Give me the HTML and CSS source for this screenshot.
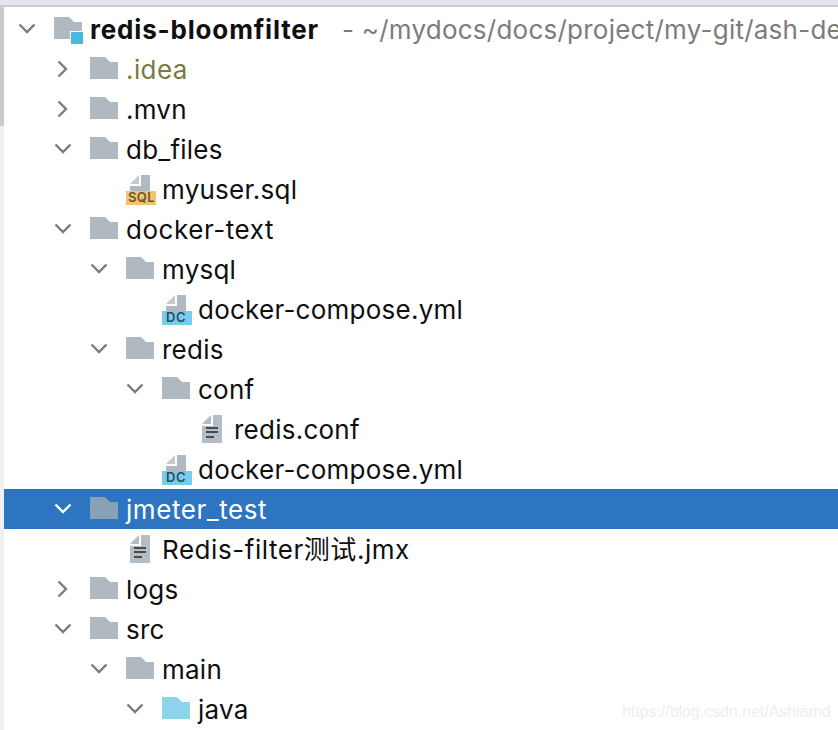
FILE: index.html
```html
<!DOCTYPE html>
<html lang="en">
<head>
<meta charset="utf-8">
<title>Project tree</title>
<link rel="stylesheet" href="styles.css">
</head>
<body>
<svg class="defs" aria-hidden="true">
  <symbol id="down" viewBox="0 0 18 18"><path d="M1.5 4.5 L9 12 L16.5 4.5" fill="none" stroke="currentColor" stroke-width="2.4"/></symbol>
  <symbol id="right" viewBox="0 0 18 18"><path d="M4.5 1.5 L12 9 L4.5 16.5" fill="none" stroke="currentColor" stroke-width="2.4"/></symbol>
  <symbol id="folder" viewBox="0 0 28 22"><path d="M0 0 H15 L20 5 H28 V22 H0 Z" fill="currentColor"/></symbol>
  <symbol id="text" viewBox="0 0 20 28"><path d="M0 9 L9 0 V9 Z" fill="#b4bdc3"/><path d="M11 0 H20 V28 H0 V11 H11 Z" fill="#b4bdc3"/><path d="M4 12 H16 V14 H4 Z M4 16 H16 V18 H4 Z M4 21 H12 V23 H4 Z" fill="#474c50"/></symbol>
  <symbol id="page" viewBox="0 0 20 18"><path d="M0 9 L9 0 V9 Z" fill="#c3cbd0"/><path d="M11 0 H20 V17 H0 V11 H11 Z" fill="#b0bac0"/></symbol>
</svg>
<div class="topbar"></div>
<div class="shell">
  <div class="rail"><div class="thumb"></div></div>
  <main class="tree">
    <div class="row d0">
      <svg class="chev"><use href="#down"/></svg>
      <span class="icon root"><svg class="folder"><use href="#folder"/></svg><i class="module"></i></span>
      <span class="name bold">redis-bloomfilter</span><span class="name path">- ~/mydocs/docs/project/my-git/ash-de</span>
    </div>
    <div class="row d1">
      <svg class="chev"><use href="#right"/></svg>
      <span class="icon"><svg class="folder"><use href="#folder"/></svg></span>
      <span class="name olive">.idea</span>
    </div>
    <div class="row d1">
      <svg class="chev"><use href="#right"/></svg>
      <span class="icon"><svg class="folder"><use href="#folder"/></svg></span>
      <span class="name">.mvn</span>
    </div>
    <div class="row d1">
      <svg class="chev"><use href="#down"/></svg>
      <span class="icon"><svg class="folder"><use href="#folder"/></svg></span>
      <span class="name">db_files</span>
    </div>
    <div class="row d2">
      <span class="chev"></span>
      <span class="icon badged"><svg class="page"><use href="#page"/></svg><b class="badge sql">SQL</b></span>
      <span class="name">myuser.sql</span>
    </div>
    <div class="row d1">
      <svg class="chev"><use href="#down"/></svg>
      <span class="icon"><svg class="folder"><use href="#folder"/></svg></span>
      <span class="name wide">docker-text</span>
    </div>
    <div class="row d2">
      <svg class="chev"><use href="#down"/></svg>
      <span class="icon"><svg class="folder"><use href="#folder"/></svg></span>
      <span class="name">mysql</span>
    </div>
    <div class="row d3">
      <span class="chev"></span>
      <span class="icon badged"><svg class="page"><use href="#page"/></svg><b class="badge dc">DC</b></span>
      <span class="name">docker-compose.yml</span>
    </div>
    <div class="row d2">
      <svg class="chev"><use href="#down"/></svg>
      <span class="icon"><svg class="folder"><use href="#folder"/></svg></span>
      <span class="name">redis</span>
    </div>
    <div class="row d3">
      <svg class="chev"><use href="#down"/></svg>
      <span class="icon"><svg class="folder"><use href="#folder"/></svg></span>
      <span class="name">conf</span>
    </div>
    <div class="row d4">
      <span class="chev"></span>
      <span class="icon"><svg class="file"><use href="#text"/></svg></span>
      <span class="name">redis.conf</span>
    </div>
    <div class="row d3">
      <span class="chev"></span>
      <span class="icon badged"><svg class="page"><use href="#page"/></svg><b class="badge dc">DC</b></span>
      <span class="name">docker-compose.yml</span>
    </div>
    <div class="row d1 selected">
      <svg class="chev"><use href="#down"/></svg>
      <span class="icon"><svg class="folder"><use href="#folder"/></svg></span>
      <span class="name wide">jmeter_test</span>
    </div>
    <div class="row d2">
      <span class="chev"></span>
      <span class="icon"><svg class="file"><use href="#text"/></svg></span>
      <span class="name wide">Redis-filter测试.jmx</span>
    </div>
    <div class="row d1">
      <svg class="chev"><use href="#right"/></svg>
      <span class="icon"><svg class="folder"><use href="#folder"/></svg></span>
      <span class="name">logs</span>
    </div>
    <div class="row d1">
      <svg class="chev"><use href="#down"/></svg>
      <span class="icon"><svg class="folder"><use href="#folder"/></svg></span>
      <span class="name">src</span>
    </div>
    <div class="row d2">
      <svg class="chev"><use href="#down"/></svg>
      <span class="icon"><svg class="folder"><use href="#folder"/></svg></span>
      <span class="name">main</span>
    </div>
    <div class="row d3">
      <svg class="chev"><use href="#down"/></svg>
      <span class="icon source"><svg class="folder"><use href="#folder"/></svg></span>
      <span class="name">java</span>
    </div>
  </main>
</div>
<div class="watermark">https://blog.csdn.net/Ashiamd</div>
</body>
</html>
```
FILE: styles.css
```css
html, body {
  margin: 0;
  height: 730px;
  overflow: hidden;
  background: #fff;
}
body {
  position: relative;
  font-family: Inter, "Noto Sans CJK SC", sans-serif;
  font-size: 26px;
  color: #0f0f0f;
}
.defs {
  display: none;
}
.topbar {
  height: 5px;
  background: #e2e5ef;
  border-bottom: 2px solid #cdcdcd;
}
.shell {
  display: flex;
  height: 723px;
}
.rail {
  width: 4px;
  flex: none;
  background: #f1f1f1;
}
.thumb {
  height: 119px;
  background: #cbcbcb;
}
.tree {
  flex: 1;
  min-width: 0;
  padding-top: 2px;
}
.row {
  display: flex;
  align-items: center;
  height: 40px;
  white-space: nowrap;
  color: #0f0f0f;
}
.d0 { padding-left: 14px; }
.d1 { padding-left: 50px; }
.d2 { padding-left: 86px; }
.d3 { padding-left: 122px; }
.d4 { padding-left: 158px; }
.chev {
  display: block;
  flex: none;
  width: 18px;
  height: 18px;
  margin-right: 18px;
  color: #7d7d7d;
}
.icon {
  position: relative;
  flex: none;
  display: block;
  width: 28px;
  height: 28px;
  margin-right: 8px;
  color: #afb9bf;
}
.folder {
  display: block;
  width: 28px;
  height: 22px;
  margin-top: 2px;
}
.file {
  display: block;
  width: 20px;
  height: 28px;
  margin-left: 4px;
}
.page {
  display: block;
  width: 20px;
  height: 18px;
  margin-left: 4px;
}
.badge {
  position: absolute;
  left: 0;
  top: 16px;
  width: 30px;
  height: 13.5px;
  font: 600 13px/13.5px Inter, sans-serif;
  box-sizing: border-box;
}
.sql {
  background: #f5c26e;
  color: #65583a;
  padding-left: 2px;
  letter-spacing: 0.4px;
}
.dc {
  background: #77cdeb;
  color: #2f4a5a;
  padding-left: 4px;
  letter-spacing: 0.6px;
}
.module {
  position: absolute;
  left: 17px;
  top: 17px;
  width: 12px;
  height: 12px;
  background: #4db5e2;
  box-shadow: 0 0 0 1px #fff;
}
.source {
  color: #8cd3ec;
}
.name {
  display: block;
  line-height: 42px;
  height: 40px;
  letter-spacing: 0.24px;
}
.wide {
  letter-spacing: 0.55px;
}
.bold {
  font-weight: 700;
  letter-spacing: 0.82px;
}
.olive {
  color: #787a42;
  letter-spacing: 0.4px;
}
.path {
  margin-left: 23px;
  color: #7c7c7c;
  letter-spacing: 0.24px;
}
.selected {
  background: #2d74c1;
}
.selected .name {
  color: #fff;
}
.selected .chev {
  color: #fff;
}
.selected .icon {
  color: #87a0b3;
}
.watermark {
  position: absolute;
  left: 622px;
  top: 703px;
  font: 15.9px/18px "Liberation Sans", sans-serif;
  color: #eeeeee;
}
```
